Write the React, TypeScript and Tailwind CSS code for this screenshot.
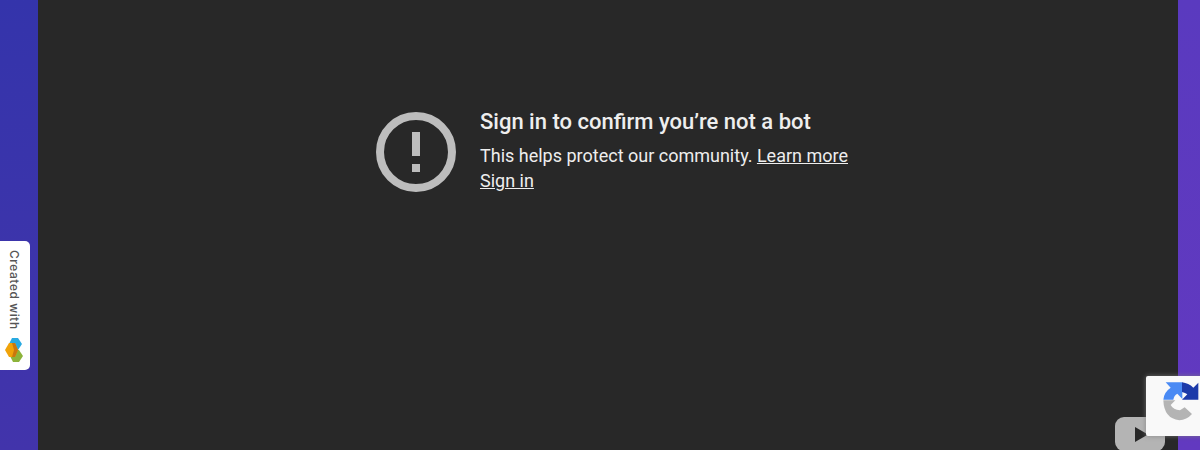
const App = () => {
  return (
    <div className="relative flex h-[450px] w-[1200px] overflow-hidden font-['Roboto',sans-serif]">
      <div className="w-[38px] shrink-0 bg-linear-to-b from-[#3434ab] to-[#4234ab]" />

      <div className="flex-1 bg-[#282828] pt-[105px] pl-[338px]">
        <div className="flex items-start gap-6">
          <svg className="mt-[7px] h-20 w-20 shrink-0" viewBox="0 0 80 80">
            <circle cx="40" cy="40" r="36" fill="none" stroke="#bdbdbd" strokeWidth="8" />
            <rect x="36" y="20" width="8" height="24" fill="#bdbdbd" />
            <rect x="36" y="52" width="8" height="8" fill="#bdbdbd" />
          </svg>
          <div className="text-[#eeeeee]">
            <h1 className="text-[22px] leading-[34px] font-medium">Sign in to confirm you’re not a bot</h1>
            <p className="mt-[4px] text-[18px] leading-[25px]">
              This helps protect our community. <a className="underline">Learn more</a>
            </p>
            <p className="text-[18px] leading-[25px]">
              <a className="underline">Sign in</a>
            </p>
          </div>
        </div>
      </div>

      <div className="w-[22px] shrink-0 bg-linear-to-b from-[#5a3abf] to-[#6239c0]" />

      {/* created with badge */}
      <div className="absolute top-[241px] left-0 flex h-[129px] w-[30px] flex-col items-center rounded-r-[5px] bg-white pt-[9px] pr-[2px]">
        <span className="text-[12px] leading-[14px] font-medium tracking-[0.55px] text-[#555555] [writing-mode:vertical-rl] font-['Inter',sans-serif]">
          Created with
        </span>
        <svg className="mt-[8px] h-[25px] w-[18px]" viewBox="0 0 18 25">
          <polygon points="7,0 13,0 17,6 13,12 7,12 4,6" fill="#29aae1" />
          <polygon points="8,12 14,12 18,18 14,24 8,24 5,18" fill="#8cb33a" />
          <polygon points="4,5 10,5 13,12 10,19 4,19 0,12" fill="#f0a30a" />
          <polygon points="7,5 10,5 13,12 10,19 7,19 9,12" fill="#c9770f" />
        </svg>
      </div>

      {/* youtube logo */}
      <svg className="absolute top-[417px] left-[1115px] h-[50px] w-[50px]" viewBox="0 0 50 50">
        <rect x="0" y="0" width="50" height="34" rx="9" fill="#b4b4b4" />
        <polygon points="20,10 20,25 33,17.5" fill="#282828" />
      </svg>

      {/* recaptcha */}
      <div className="absolute top-[376px] left-[1146px] h-[60px] w-[60px] rounded-l-[2px] bg-[#f9f9f9] pt-[2px] pl-[8px] shadow-[0_0_5px_rgba(128,128,128,0.8)]">
        <svg className="h-[48px] w-[45px]" viewBox="0 0 135 144">
          <path d="M28 65 Q30 42 50 29 L35 13 L85 13 L85 63 L70 47 Q60 52 58 65 Z" fill="#4a8af4" />
          <path d="M84 13 Q104 16 118 29 L133 14 L133 65 L84 65 L100 49 Q94 44 84 42 Z" fill="#1c3aa9" />
          <path d="M28 67 L64 67 L50 81 Q58 96 78 97 L92 88 L114 108 Q98 126 76 127 Q30 122 28 67 Z" fill="#b4b4b4" />
        </svg>
      </div>
    </div>
  );
};

export default App;
